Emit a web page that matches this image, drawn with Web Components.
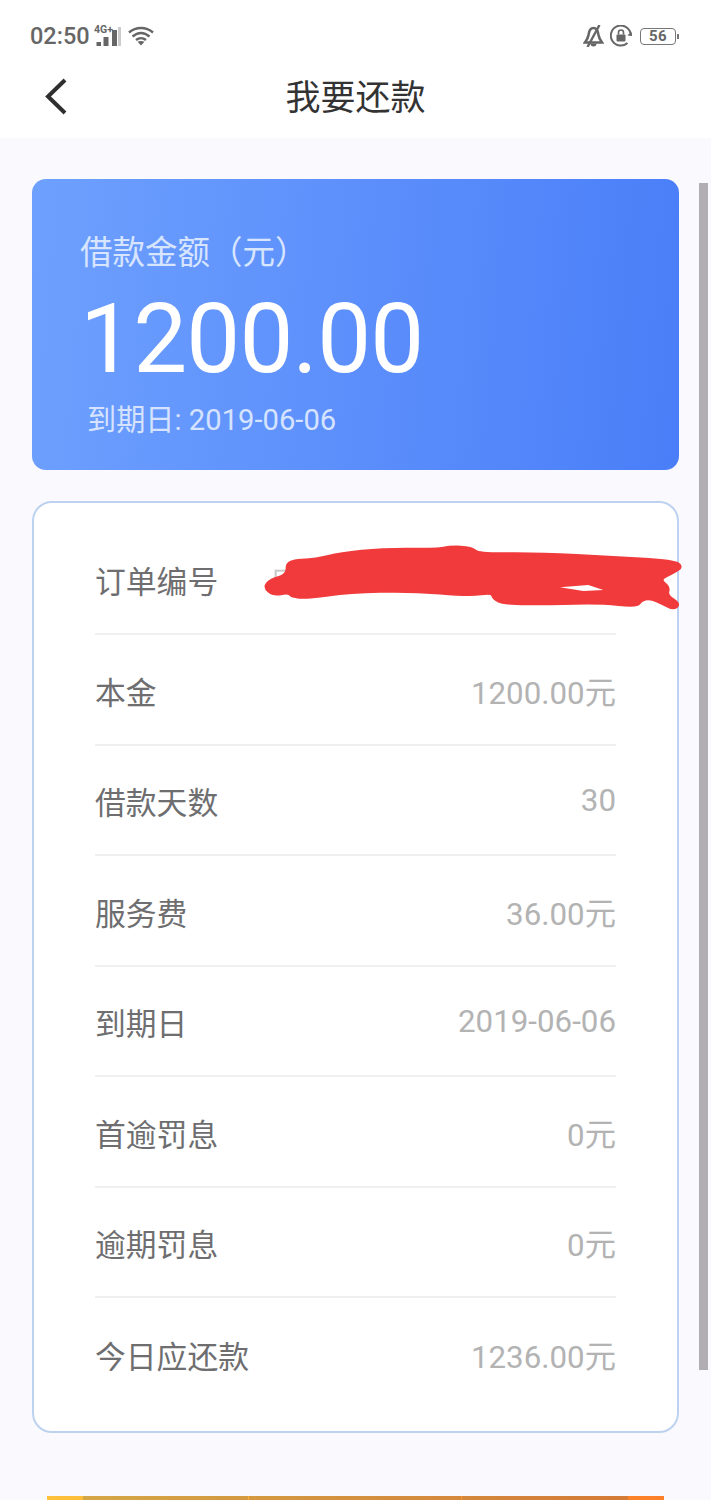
<!DOCTYPE html>
<html lang="zh">
<head>
<meta charset="utf-8">
<title>我要还款</title>
<style>
  html, body { margin: 0; padding: 0; height: 1500px; overflow: hidden; background: #faf9fd; }
  body { font-family: Roboto, "Noto Sans CJK SC", sans-serif; }
</style>
</head>
<body>
<template id="status-tpl">
  <style>
    :host { display: flex; align-items: center; justify-content: space-between; height: 70px; padding: 2px 32px 0 30px; box-sizing: border-box; background: #fff; color: #666; }
    .side { display: flex; align-items: center; }
    .time { font: 500 23.5px Roboto, sans-serif; }
    svg { display: block; }
    text { font: 700 10.500px Roboto, sans-serif; fill: #666; }
  </style>
  <div class="side">
    <span class="time">02:50</span>
    <svg width="28" height="24" viewBox="0 0 28 24" style="margin-left:4px">
      <text x="0" y="9">4G+</text>
      <rect x="2.500" y="18" width="4.500" height="4" fill="#666"/>
      <rect x="9.500" y="13" width="5" height="9" fill="#666"/>
      <rect x="18" y="6" width="5" height="16" fill="#666"/>
      <rect x="24" y="3" width="3" height="19" fill="#ccc"/>
    </svg>
    <svg width="26" height="20" viewBox="0 0 26 20" style="margin-left:6px" fill="none" stroke="#666" stroke-width="2.400">
      <path d="M1 6.500C8 .5 18 .5 25 6.500"/>
      <path d="M4.500 10.500C10 6 16 6 21.500 10.500"/>
      <path d="M8 14C11 11.500 15 11.500 18 14"/>
      <path d="M13 19.500l-3.500-3.700c2.300-1.200 4.700-1.200 7 0z" fill="#666" stroke="none"/>
    </svg>
  </div>
  <div class="side">
    <svg width="21" height="22" viewBox="0 0 21 22">
      <path d="M10.500 3C7 3 6 6 5.500 10C5 13 4 15 2 17.500H19C17 15 16 13 15.500 10C15 6 14 3 10.500 3Z" fill="none" stroke="#666" stroke-width="2.600"/>
      <path d="M16.500 0L4.500 22" stroke="#666" stroke-width="2.400"/>
      <path d="M7.500 18.500a3 3 0 0 0 6 0z" fill="#666"/>
    </svg>
    <svg width="22" height="22" viewBox="0 0 22 22" style="margin-left:6px" fill="none">
      <path d="M17.500 18A10 10 0 1 1 20.500 8" stroke="#666" stroke-width="2"/>
      <path d="M17.500 10.500L21 6.500L23 11z" fill="#666"/>
      <rect x="6.500" y="9.500" width="9" height="7" rx="1" fill="#666"/>
      <path d="M8.500 9.500V7.500a2.500 2.500 0 0 1 5 0v2" stroke="#666" stroke-width="1.600"/>
    </svg>
    <battery-chip style="margin-left:8px">56</battery-chip>
  </div>
</template>

<template id="battery-tpl">
  <style>
    :host { display: flex; align-items: center; }
    .body { width: 34px; height: 15px; border: 1.500px solid #777; border-radius: 4px; display: flex; align-items: center; justify-content: center; font: 700 15px Roboto, sans-serif; color: #666; letter-spacing: .5px; }
    .tip { width: 2px; height: 5px; background: #777; margin-left: 1px; }
  </style>
  <div class="body"><slot></slot></div><div class="tip"></div>
</template>

<template id="nav-tpl">
  <style>
    :host { display: block; position: relative; height: 68px; background: #fff; }
    .title { height: 48px; display: flex; align-items: center; justify-content: center; font: 400 35px "Noto Sans CJK SC", sans-serif; color: #333; }
    svg { position: absolute; left: 44px; top: 7px; }
  </style>
  <svg width="24" height="40" viewBox="0 0 24 40"><path d="M21 3L4 19.500L21 36" fill="none" stroke="#2f2f2f" stroke-width="4"/></svg>
  <div class="title"><slot></slot></div>
</template>

<template id="hero-tpl">
  <style>
    :host { display: block; height: 291px; box-sizing: border-box; border-radius: 14px; padding: 48px 48px 0; color: #fff; background: linear-gradient(95deg, #6ea0fe, #4a7ef8); }
    .label { font: 400 32.500px/46px "Noto Sans CJK SC", sans-serif; color: #d8e5ff; }
    .amount { font: 400 96px/100px Roboto, sans-serif; margin-top: 16px; letter-spacing: -.8px; }
    .due { font: 400 29.200px/40px Roboto, "Noto Sans CJK SC", sans-serif; color: #d5e3ff; margin: 11px 0 0 7px; }
  </style>
  <div class="label"><slot name="label"></slot></div>
  <div class="amount"><slot name="amount"></slot></div>
  <div class="due"><slot name="due"></slot></div>
</template>

<template id="card-tpl">
  <style>
    :host { display: block; box-sizing: border-box; height: 932px; margin-top: 31px; padding: 21.500px 61px 0; background: #fff; border: 2px solid #bdd2f0; border-radius: 20px; }
  </style>
  <slot></slot>
</template>

<template id="row-tpl">
  <style>
    :host { display: flex; align-items: center; justify-content: space-between; height: 110.500px; padding-top: 2px; box-sizing: border-box; border-bottom: 2px solid #f0f0f2; font: 400 30.800px "Noto Sans CJK SC", Roboto, sans-serif; }
    :host(:last-child) { border-bottom: 0; }
    .k { color: #6e6e70; }
    .v { color: #b3b3b3; font-family: Roboto, "Noto Sans CJK SC", sans-serif; font-size: 31.300px; }
  </style>
  <span class="k"><slot name="k"></slot></span>
  <span class="v"><slot name="v"></slot></span>
</template>

<template id="button-tpl">
  <style>
    :host { display: flex; position: absolute; left: 47px; top: 1496px; width: 617px; height: 60px; padding: 0 36px; box-sizing: border-box; gap: 1px; background: linear-gradient(90deg, #fdc13c, #fd8028); }
    div { height: 100%; background: rgba(70, 90, 110, .22); }
    .a { width: 165px; } .b { width: 212px; } .c { width: 166px; }
  </style>
  <div class="a"></div><div class="b"></div><div class="c"></div>
</template>

<status-bar></status-bar>
<nav-bar>我要还款</nav-bar>
<main-page>
  <loan-hero>
    <span slot="label">借款金额（元）</span>
    <span slot="amount">1200.00</span>
    <span slot="due">到期日: 2019-06-06</span>
  </loan-hero>
  <detail-card>
    <detail-row><span slot="k">订单编号</span><span slot="v"></span></detail-row>
    <detail-row><span slot="k">本金</span><span slot="v">1200.00元</span></detail-row>
    <detail-row><span slot="k">借款天数</span><span slot="v">30</span></detail-row>
    <detail-row><span slot="k">服务费</span><span slot="v">36.00元</span></detail-row>
    <detail-row><span slot="k">到期日</span><span slot="v">2019-06-06</span></detail-row>
    <detail-row><span slot="k">首逾罚息</span><span slot="v">0元</span></detail-row>
    <detail-row><span slot="k">逾期罚息</span><span slot="v">0元</span></detail-row>
    <detail-row><span slot="k">今日应还款</span><span slot="v">1236.00元</span></detail-row>
  </detail-card>
  <pay-button></pay-button>
  <scratch-mark></scratch-mark>
  <page-scrollbar></page-scrollbar>
</main-page>

<script>
class TplElement extends HTMLElement {
  constructor() {
    super();
    const tpl = document.getElementById(this.constructor.tpl);
    this.attachShadow({ mode: 'open' }).appendChild(tpl.content.cloneNode(true));
  }
}
const simple = (name, tpl) => customElements.define(name, class extends TplElement { static tpl = tpl; });

simple('status-bar', 'status-tpl');
simple('battery-chip', 'battery-tpl');
simple('nav-bar', 'nav-tpl');
simple('loan-hero', 'hero-tpl');
simple('detail-card', 'card-tpl');
simple('detail-row', 'row-tpl');
simple('pay-button', 'button-tpl');

class MainPage extends HTMLElement {
  constructor() {
    super();
    this.attachShadow({ mode: 'open' }).innerHTML = `
      <style>:host { display: block; padding: 41px 32px 0; }</style>
      <slot></slot>`;
  }
}
customElements.define('main-page', MainPage);

// closed outline through the midpoints, so the scribble has soft edges
function smoothPath(pts) {
  const mid = (a, b) => [(a[0] + b[0]) / 2, (a[1] + b[1]) / 2];
  let d = 'M' + mid(pts[pts.length - 1], pts[0]).join(' ');
  pts.forEach((p, i) => {
    d += 'Q' + p.join(' ') + ' ' + mid(p, pts[(i + 1) % pts.length]).join(' ');
  });
  return d + 'Z';
}

// red scribble over the order number, coordinates taken from a 3x crop
const SCRATCH = [[110,92],[200,88],[270,70],[400,57],[560,58],[600,50],[665,52],[685,72],[860,70],[1100,82],[1270,92],[1298,110],[1270,128],[1228,148],[1258,172],[1250,196],[1290,222],[1270,238],[1240,222],[1200,204],[1172,212],[1162,230],[1050,218],[900,222],[760,222],[730,205],[725,187],[660,197],[480,182],[300,187],[170,204],[125,200],[115,187],[70,196],[42,172],[62,148],[112,135]];

class ScratchMark extends HTMLElement {
  constructor() {
    super();
    this.attachShadow({ mode: 'open' }).innerHTML = `
      <style>
        :host { display: block; position: absolute; left: 250px; top: 530px; width: 461px; height: 90px; }
        svg { display: block; }
      </style>
      <svg width="461" height="90" viewBox="0 0 1383 270">
        <rect x="77" y="122" width="50" height="50" fill="none" stroke="#c8c8c8" stroke-width="6"/>
        <path fill="#f13a3b" stroke="#f13a3b" stroke-width="8" stroke-linejoin="round" d="${smoothPath(SCRATCH)}"/>
        <path fill="#fff" d="M930 172 L1015 165 L1060 180 L1000 183Z"/>
      </svg>`;
  }
}
customElements.define('scratch-mark', ScratchMark);

class PageScrollbar extends HTMLElement {
  constructor() {
    super();
    this.attachShadow({ mode: 'open' }).innerHTML = `
      <style>:host { display: block; position: absolute; left: 699px; top: 183px; width: 9px; height: 1187px; background: #b0aeb2; }</style>`;
  }
}
customElements.define('page-scrollbar', PageScrollbar);
</script>
</body>
</html>
